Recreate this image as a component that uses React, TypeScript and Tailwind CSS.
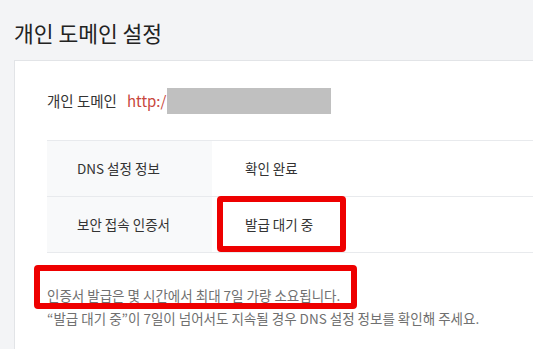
const rows = [
  { label: "DNS 설정 정보", value: "확인 완료", marked: false },
  { label: "보안 접속 인증서", value: "발급 대기 중", marked: true },
];

export default function App() {
  return (
    <div
      className="w-[533px] h-[349px] overflow-hidden bg-[#f3f4f6] text-[#333]"
      style={{ fontFamily: '"Noto Sans CJK KR", "Noto Sans", sans-serif' }}
    >
      <h1 className="pl-[14px] pt-[18px] h-[60px] text-[21.5px] leading-[30px] text-[#222]">개인 도메인 설정</h1>

      <div className="ml-[14px] h-[289px] bg-white border-l border-t border-[#e2e4e7] pl-[32px]">
        {/* domain row */}
        <div className="flex items-center h-[79px] pt-[1px]">
          <span className="text-[14.5px] text-[#333]">개인 도메인</span>
          <span className="ml-[10px] text-[15px] text-[#c8473d]">http:/</span>
          <span className="ml-[1px] w-[164px] h-[26px] bg-[#c0c0c0]" />
        </div>

        {/* status table */}
        <div className="border-t border-[#e8eaed]">
          {rows.map((row) => (
            <div key={row.label} className="flex h-[56px] border-b border-[#e8eaed] text-[13.5px]">
              <div className="w-[165px] flex items-center pl-[30px] bg-[#f8f9fa] text-[#333]">{row.label}</div>
              <div className="relative flex-1 flex items-center pl-[33px] text-[#333]">
                {row.value}
                {row.marked && (
                  <div className="absolute left-[5px] top-[-1px] w-[129px] h-[56px] border-[6px] border-[#ee0000] rounded-[4px]" />
                )}
              </div>
            </div>
          ))}
        </div>

        {/* notes */}
        <div className="pt-[31px] text-[13.5px] leading-[23px] text-[#707070]">
          <p className="relative">
            인증서 발급은 몇 시간에서 최대 7일 가량 소요됩니다.
            <span className="absolute left-[-13px] top-[-19px] w-[323px] h-[44px] border-[6px] border-[#ee0000] rounded-[4px]" />
          </p>
          <p>“발급 대기 중”이 7일이 넘어서도 지속될 경우 DNS 설정 정보를 확인해 주세요.</p>
        </div>
      </div>
    </div>
  );
}
